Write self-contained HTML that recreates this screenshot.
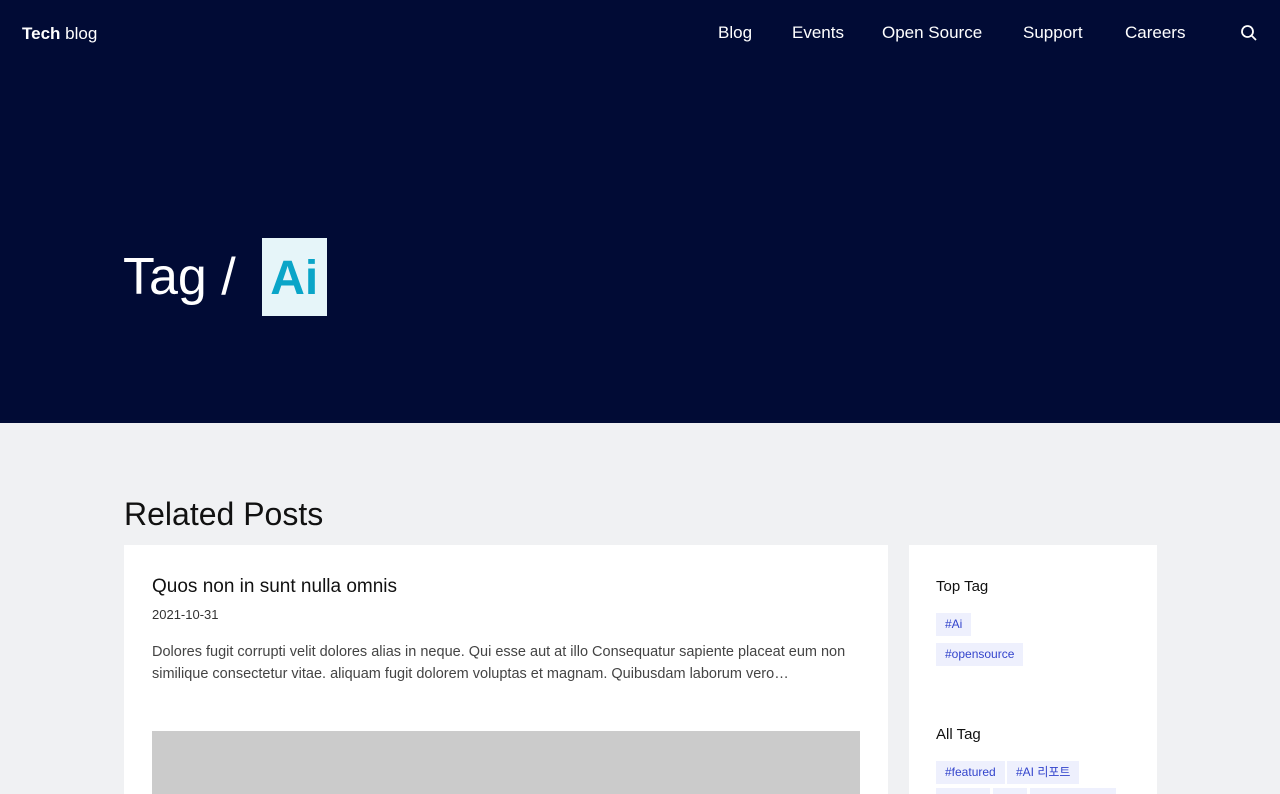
<!DOCTYPE html>
<html style="width:1280px;height:794px;overflow:hidden"><head><meta charset="utf-8"><style>
*{margin:0;padding:0;box-sizing:border-box}
body{width:1280px;height:794px;overflow:hidden;background:#f0f1f3;font-family:"Liberation Sans","Noto Sans CJK KR",sans-serif;position:relative}
.hero{height:423px;background:#010b35;position:relative;color:#fff}
.logo{position:absolute;left:22px;top:24px;font-size:17px}
.logo b{font-weight:700}
.nav{position:absolute;top:23px;font-size:17px;color:#fff}
h1{position:absolute;left:123px;top:238px;font-weight:400;font-size:52px;line-height:78px;display:flex;align-items:center}
h1 span{display:inline-block;background:#e6f5f9;color:#0aa5c8;font-weight:700;width:65px;height:78px;text-align:center;margin-left:26px;font-size:48px;line-height:82px}
h2{position:absolute;left:124px;top:496px;font-size:32px;font-weight:400;color:#111}
.card{position:absolute;left:124px;top:545px;width:764px;height:249px;background:#fff;overflow:hidden}
.side{position:absolute;left:909px;top:545px;width:248px;height:249px;background:#fff;overflow:hidden}
.tag{position:absolute;background:#eef0fd;color:#3344cc;font-size:12px;height:23px;line-height:23px;padding:0 9px}
</style></head><body>
<div class="hero">
<div class="logo"><b>Tech</b> blog</div>
<div class="nav" style="left:718px">Blog</div>
<div class="nav" style="left:792px">Events</div>
<div class="nav" style="left:882px">Open Source</div>
<div class="nav" style="left:1023px">Support</div>
<div class="nav" style="left:1125px">Careers</div>
<svg style="position:absolute;left:1240px;top:24px" width="18" height="18" viewBox="0 0 18 18" fill="none" stroke="#fff" stroke-width="1.8"><circle cx="7.5" cy="7.5" r="5.5"/><path d="M11.5 11.5L16 16"/></svg>
<h1>Tag /<span>Ai</span></h1>
</div>
<h2>Related Posts</h2>
<div class="card">
<div style="position:absolute;left:28px;top:31px;font-size:19px;color:#111">Quos non in sunt nulla omnis</div>
<div style="position:absolute;left:28px;top:62px;font-size:13px;color:#333">2021-10-31</div>
<div style="position:absolute;left:28px;top:96px;width:710px;font-size:14.5px;line-height:22px;color:#444">Dolores fugit corrupti velit dolores alias in neque. Qui esse aut at illo Consequatur sapiente placeat eum non similique consectetur vitae. aliquam fugit dolorem voluptas et magnam. Quibusdam laborum vero…</div>
<div style="position:absolute;left:28px;top:186px;width:708px;height:80px;background:#cbcbcb"></div>
</div>
<div class="side">
<div style="position:absolute;left:27px;top:33px;font-size:15px;color:#111">Top Tag</div>
<div class="tag" style="left:27px;top:68px">#Ai</div>
<div class="tag" style="left:27px;top:98px">#opensource</div>
<div style="position:absolute;left:27px;top:181px;font-size:15px;color:#111">All Tag</div>
<div class="tag" style="left:27px;top:216px">#featured</div>
<div class="tag" style="left:98px;top:216px">#AI 리포트</div>
<div class="tag" style="left:27px;top:243px;width:54px"></div>
<div class="tag" style="left:84px;top:243px;width:34px"></div>
<div class="tag" style="left:121px;top:243px;width:86px"></div>
</div>
</body></html>
